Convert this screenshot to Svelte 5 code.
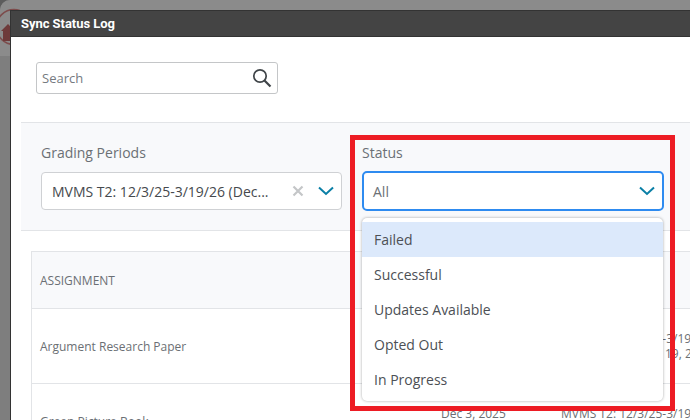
<script>
  const statuses = ['Failed', 'Successful', 'Updates Available', 'Opted Out', 'In Progress']

  const rows = [
    {
      name: 'Argument Research Paper',
      date: 'Dec 3, 2025',
      period: 'MVMS T2: 12/3/25-3/19/26 (Dec 3, 2025 - Mar 19, 2026)'
    },
    {
      name: 'Green Picture Book',
      date: 'Dec 3, 2025',
      period: 'MVMS T2: 12/3/25-3/19/26 (Dec 3, 2025 - Mar 19, 2026)'
    }
  ]
</script>

<div class="page">
  <div class="backdrop">
    <div class="strip">
      <svg width="20" height="50" viewBox="0 0 20 50">
        <circle cx="14" cy="27" r="17.5" fill="none" stroke="#7d4c4c" stroke-width="1.5" />
        <path d="M1 31 8 24 15 31H13V41H3V31Z" fill="#6e3a3a" />
      </svg>
    </div>
  </div>

  <div class="modal">
    <div class="title">Sync Status Log</div>

    <div class="content">
      <div class="search-row">
        <div class="search">
          <span>Search</span>
          <svg width="22" height="22" viewBox="0 0 22 22" fill="none" stroke="#3f4448">
            <circle cx="9" cy="9" r="6.2" stroke-width="1.7" />
            <path d="M13.5 13.5 19.5 19.5" stroke-width="2.2" />
          </svg>
        </div>
      </div>

      <div class="filters">
        <div class="filter">
          <div class="label">Grading Periods</div>
          <div class="select">
            <span class="value">MVMS T2: 12/3/25-3/19/26 (Dec...</span>
            <svg class="clear" width="12" height="12" viewBox="0 0 12 12" stroke="#c4c6c8" stroke-width="2.2">
              <path d="M1.5 1.5 10.5 10.5M10.5 1.5 1.5 10.5" />
            </svg>
            <svg class="chev" width="16" height="10" viewBox="0 0 16 10" fill="none" stroke="#0a7fa6" stroke-width="2">
              <path d="M1 1.5 8 8 15 1.5" />
            </svg>
          </div>
        </div>

        <div class="filter status">
          <div class="label">Status</div>
          <div class="select focused">
            <span class="value muted">All</span>
            <svg class="chev" width="16" height="10" viewBox="0 0 16 10" fill="none" stroke="#0a7fa6" stroke-width="2">
              <path d="M1 1.5 8 8 15 1.5" />
            </svg>
          </div>
          <ul class="menu">
            {#each statuses as status, i}
              <li class:active={i === 0}>{status}</li>
            {/each}
          </ul>
          <div class="callout"></div>
        </div>
      </div>

      <div class="table">
        <div class="row head">
          <div>ASSIGNMENT</div>
        </div>
        {#each rows as row}
          <div class="row">
            <div class="name">{row.name}</div>
            <div class="date">{row.date}</div>
            <div class="period">{row.period}</div>
          </div>
        {/each}
      </div>
    </div>
  </div>
</div>

<style>
  :global(body) {
    margin: 0;
    overflow: hidden;
    background: #5c5c5c;
  }

  .page {
    position: relative;
    width: 690px;
    height: 420px;
    overflow: hidden;
    padding: 10px 0 0 10px;
    box-sizing: border-box;
    font-family: "Open Sans", sans-serif;
  }

  .backdrop {
    position: absolute;
    inset: 0;
    overflow: hidden;
    background: #7e7e7e;
    border-radius: 10px 0 0 0;
  }

  .strip {
    height: 56px;
    background: #8b8b8b;
  }

  .strip svg {
    display: block;
  }

  .modal {
    position: relative;
    height: 420px;
    background: #fff;
    border-left: 1px solid #333;
    border-top: 1px solid #333;
  }

  .title {
    height: 25px;
    padding-left: 10px;
    background: #444;
    color: #fff;
    font: 700 13px/25px Roboto, sans-serif;
    letter-spacing: -0.05px;
    border-bottom: 1px solid #333;
  }

  .content {
    padding-left: 10px;
  }

  .search-row {
    padding: 25px 0 28px 15px;
  }

  .search {
    width: 242px;
    height: 32px;
    box-sizing: border-box;
    display: flex;
    align-items: center;
    justify-content: space-between;
    padding: 0 4px 0 5px;
    border: 1px solid #c4c6c8;
    border-radius: 3px;
    font-size: 13px;
    color: #757a7f;
  }

  .filters {
    display: flex;
    gap: 20px;
    height: 107px;
    padding: 0 0 0 20px;
    background: #f8f9fb;
    border-top: 1px solid #e2e4e7;
    border-bottom: 1px solid #e2e4e7;
  }

  .filter {
    position: relative;
    width: 301px;
    flex: none;
    padding-top: 20px;
  }

  .status {
    width: 302px;
  }

  .label {
    font-size: 14px;
    line-height: 19px;
    color: #6b7075;
    margin-bottom: 10px;
  }

  .select {
    height: 38px;
    box-sizing: border-box;
    display: flex;
    align-items: center;
    padding: 0 6px 0 10px;
    background: #fff;
    border: 1px solid #cfd1d4;
    border-radius: 4px;
    font-size: 14px;
    color: #45494d;
  }

  .select.focused {
    height: 40px;
    margin-top: -1px;
    border: 2px solid #2e8bf0;
    padding-left: 9px;
    border-radius: 5px;
  }

  .value {
    flex: 1;
    white-space: nowrap;
  }

  .muted {
    color: #6b7075;
  }

  .clear {
    margin-right: 14px;
  }

  .chev {
    margin-right: 1px;
  }

  .menu {
    position: absolute;
    z-index: 2;
    top: 95px;
    left: 0;
    right: 1px;
    margin: 0;
    padding: 4px 0;
    list-style: none;
    background: #fff;
    border-radius: 5px;
    box-shadow: 0 0 3px rgba(0, 0, 0, 0.35);
    font-size: 14px;
    color: #4c5055;
  }

  .menu li {
    height: 35px;
    line-height: 35px;
    padding-left: 12px;
  }

  .menu li.active {
    background: #dce9fb;
  }

  .callout {
    position: absolute;
    z-index: 3;
    left: -12px;
    top: 12px;
    width: 325px;
    height: 276px;
    box-sizing: border-box;
    border: 5px solid #ed1c24;
  }

  .table {
    margin: 20px 0 0 10px;
    width: 900px;
    border-left: 1px solid #e2e4e7;
    border-top: 1px solid #e2e4e7;
    font-size: 12px;
    color: #6b6f74;
  }

  .row {
    display: grid;
    grid-template-columns: 401px 120px 170px;
    height: 74px;
    align-items: center;
    padding-left: 8px;
    border-bottom: 1px solid #e2e4e7;
  }

  .head {
    height: 56px;
    background: #f8f9fb;
  }

  /* the date sits level with the first line of the period next to it */
  .date {
    min-height: 30px;
    line-height: 15px;
  }

  .period {
    line-height: 15px;
  }
</style>
